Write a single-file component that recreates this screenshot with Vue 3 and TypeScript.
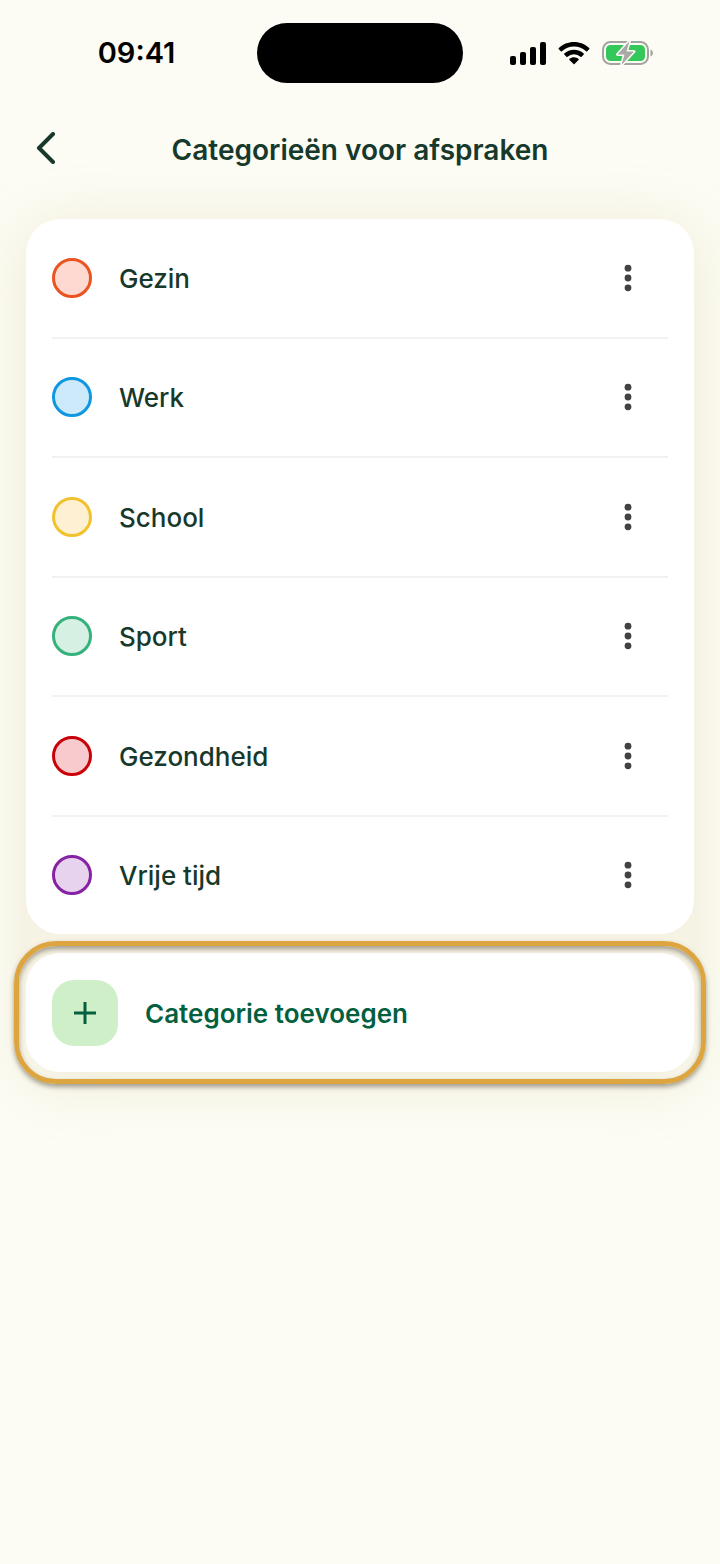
<script setup lang="ts">
interface Category {
  name: string
  tone: string
}

const categories: Category[] = [
  { name: 'Gezin', tone: 'orange' },
  { name: 'Werk', tone: 'blue' },
  { name: 'School', tone: 'yellow' },
  { name: 'Sport', tone: 'green' },
  { name: 'Gezondheid', tone: 'red' },
  { name: 'Vrije tijd', tone: 'purple' },
]
</script>

<template>
  <div class="screen">
    <div class="status">
      <time class="clock">09:41</time>
      <div class="island"></div>
      <div class="indicators">
        <svg width="37" height="24" viewBox="0 0 37 24" aria-hidden="true">
          <rect x="1" y="15" width="6" height="9" rx="2" />
          <rect x="11" y="11" width="6" height="13" rx="2" />
          <rect x="21" y="6" width="6" height="18" rx="2" />
          <rect x="31" y="1" width="6" height="23" rx="2" />
        </svg>
        <svg width="32" height="24" viewBox="0 0 32 24" aria-hidden="true">
          <path d="M16 1C10 1 4.700 3.300.800 7a.8.8 0 0 0 0 1.200l2 2a.8.8 0 0 0 1.100 0A17.500 17.500 0 0 1 16 5.400c4.700 0 8.900 1.800 12.100 4.800a.8.8 0 0 0 1.100 0l2-2a.8.8 0 0 0 0-1.200C27.300 3.300 22 1 16 1z" />
          <path d="M16 8.700c-3.700 0-7.100 1.400-9.700 3.700a.8.8 0 0 0 0 1.200l2.100 2.100c.3.300.8.300 1.100 0a9.600 9.600 0 0 1 13 0c.3.300.8.300 1.100 0l2.100-2.100a.8.8 0 0 0 0-1.200A14.500 14.500 0 0 0 16 8.700z" />
          <path d="M16 16.200c-1.800 0-3.300.6-4.500 1.500a.8.8 0 0 0 0 1.200l4 4c.3.300.7.300 1 0l4-4a.8.8 0 0 0 0-1.200 7.400 7.400 0 0 0-4.500-1.500z" />
        </svg>
        <svg width="52" height="26" viewBox="0 0 52 26" aria-hidden="true">
          <rect x="1" y="2" width="45" height="22" rx="7.500" fill="none" stroke="#a3a3a0" stroke-width="2" />
          <rect x="4" y="5" width="39" height="16" rx="4.500" fill="#34c759" />
          <path d="M48.500 9.500c1.500.6 2.500 2 2.500 3.500s-1 2.900-2.500 3.500z" fill="#a3a3a0" />
          <path d="M27.500 1 15.500 14.500h7L19.500 25 32 11.500h-7.500z" fill="#a9a9a6" stroke="#fcfcf4" stroke-width="3" stroke-linejoin="round" paint-order="stroke" />
        </svg>
      </div>
    </div>

    <header class="topbar">
      <button class="back" type="button" aria-label="Terug">
        <svg width="20" height="32" viewBox="0 0 20 32" aria-hidden="true">
          <path d="M17 2 3 16l14 14" fill="none" stroke="currentColor" stroke-width="4" stroke-linecap="round" stroke-linejoin="round" />
        </svg>
      </button>
      <h1>Categorieën voor afspraken</h1>
    </header>

    <main class="content">
      <ul class="card list">
        <li v-for="category in categories" :key="category.name" class="row">
          <span class="swatch" :class="category.tone"></span>
          <span class="name">{{ category.name }}</span>
          <button class="more" type="button" :aria-label="`Opties voor ${category.name}`">
            <svg width="8" height="28" viewBox="0 0 8 28" fill="currentColor" aria-hidden="true">
              <circle cx="4" cy="4.200" r="3.400" />
              <circle cx="4" cy="14" r="3.400" />
              <circle cx="4" cy="23.800" r="3.400" />
            </svg>
          </button>
        </li>
      </ul>

      <button class="card add" type="button">
        <span class="plus">
          <svg width="22" height="22" viewBox="0 0 22 22" aria-hidden="true">
            <path d="M11 0v22M0 11h22" fill="none" stroke="currentColor" stroke-width="3" />
          </svg>
        </span>
        <span class="label">Categorie toevoegen</span>
      </button>
    </main>
  </div>
</template>

<style>
body {
  margin: 0;
  background: #fcfcf4;
}
</style>

<style scoped>
.screen {
  min-height: 100vh;
  box-sizing: border-box;
  overflow: hidden;
  background: #fcfcf4;
  color: #17392b;
  font-family: Inter, "Liberation Sans", sans-serif;
}

.status {
  display: grid;
  grid-template-columns: 1fr 206px 1fr;
  align-items: center;
  padding-top: 23px;
  color: #000;
}

.clock {
  justify-self: center;
  padding-left: 16px;
  font-size: 29px;
  line-height: 36px;
  font-weight: 600;
}

.island {
  height: 60px;
  border-radius: 30px;
  background: #000;
}

.indicators {
  display: flex;
  align-items: center;
  justify-content: center;
  gap: 12px;
  padding-right: 20px;
}

.topbar {
  display: grid;
  grid-template-columns: 60px 1fr 60px;
  align-items: center;
  height: 60px;
  margin-top: 37px;
  padding: 0 16px;
}

button {
  margin: 0;
  padding: 0;
  border: 0;
  background: none;
  color: inherit;
  font: inherit;
  cursor: pointer;
}

.back {
  display: grid;
  place-items: center;
  height: 56px;
  align-self: start;
}

h1 {
  margin: 0;
  text-align: center;
  font-size: 28px;
  line-height: 36px;
  font-weight: 600;
}

.content {
  position: relative;
  isolation: isolate;
  display: grid;
  gap: 19px;
  margin: 39px 26px 0;
}

/* One soft glow behind both cards, so neither shades the other. */
.content::before {
  content: "";
  position: absolute;
  z-index: -1;
  inset: 0;
  border-radius: 34px;
  background: #f6f2e4;
  box-shadow: 0 8px 60px rgba(205, 185, 125, 0.28);
}

.card {
  border-radius: 34px;
  background: #fff;
}

.list {
  display: flex;
  flex-direction: column;
  box-sizing: border-box;
  min-height: 715px;
  margin: 0;
  padding: 0 26px;
  list-style: none;
}

.row {
  display: flex;
  flex: 1 1 auto;
  align-items: center;
  gap: 27px;
}

.row + .row {
  border-top: 2px solid #f2f2f0;
}

.swatch {
  width: 40px;
  height: 40px;
  box-sizing: border-box;
  border: 3px solid;
  border-radius: 50%;
}

.orange { border-color: #e95420; background: #fdd9d1; }
.blue { border-color: #0f97e0; background: #cdeafa; }
.yellow { border-color: #f1c22e; background: #fef1d3; }
.green { border-color: #35b27c; background: #d7f0e4; }
.red { border-color: #c90209; background: #f7cbce; }
.purple { border-color: #8722a5; background: #e7d3ee; }

.name {
  flex: 1;
  padding-top: 2px;
  font-size: 26px;
  line-height: 36px;
  font-weight: 500;
}

.label {
  padding-top: 2px;
}

.more {
  display: grid;
  place-items: center;
  width: 80px;
  height: 80px;
  color: #424242;
}

.add {
  position: relative;
  display: flex;
  align-items: center;
  gap: 27px;
  min-height: 119px;
  padding: 26px;
  color: #03603f;
  font-size: 26px;
  line-height: 36px;
  font-weight: 600;
  text-align: left;
}

.add::after {
  content: "";
  position: absolute;
  inset: -12px;
  border: 5px solid #dda53f;
  border-radius: 42px;
  box-shadow: 0 3px 5px rgba(60, 50, 30, 0.45), inset 0 3px 5px rgba(60, 50, 30, 0.45);
  pointer-events: none;
}

.plus {
  display: grid;
  place-items: center;
  width: 66px;
  height: 66px;
  border-radius: 22px;
  background: #ceefc7;
}
</style>
